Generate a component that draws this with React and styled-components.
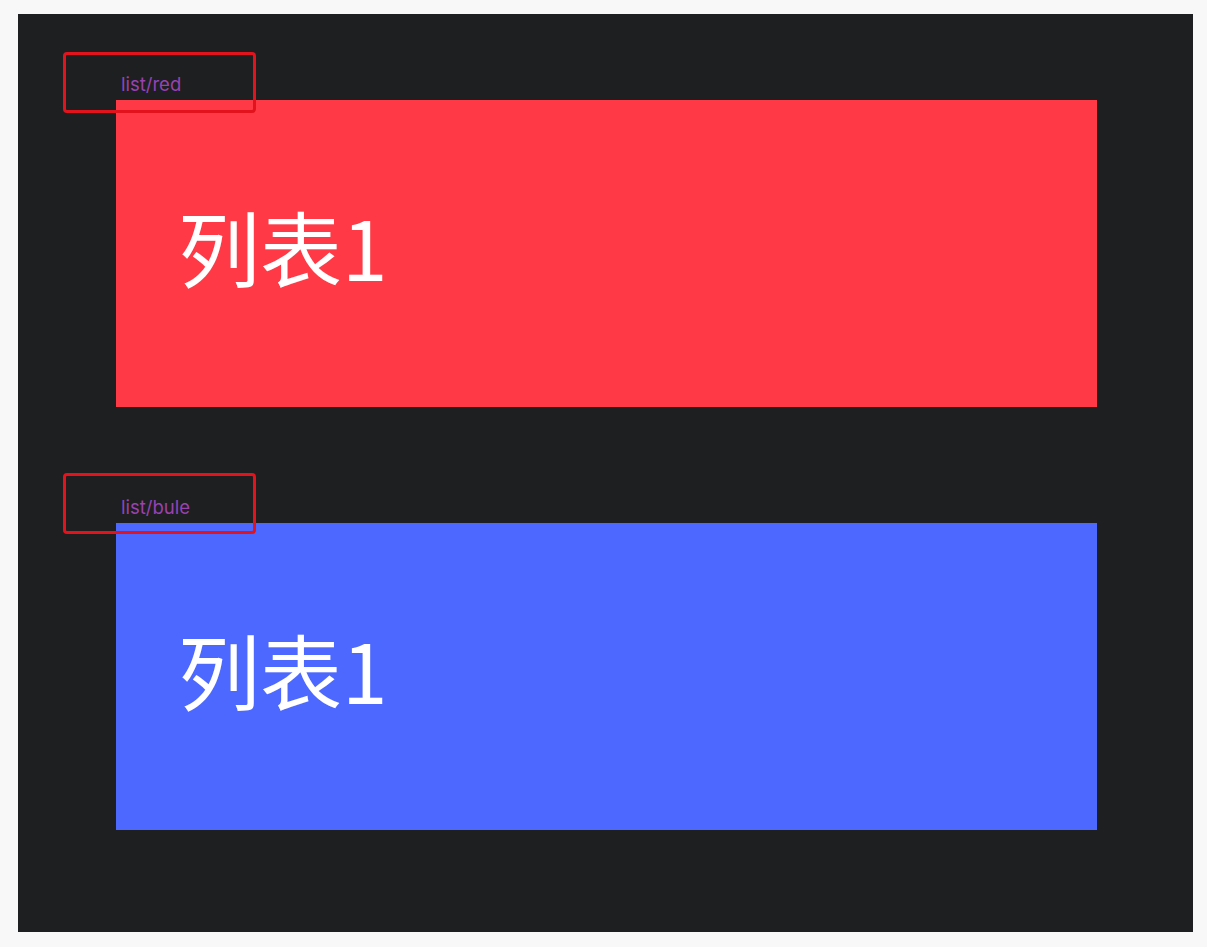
import styled, { createGlobalStyle } from "styled-components";

const GlobalStyle = createGlobalStyle`
  body {
    margin: 0;
    background: #f8f8f8;
    font-family: Inter, "Noto Sans", "Noto Sans CJK SC", sans-serif;
  }
`;

const Canvas = styled.div`
  box-sizing: border-box;
  margin: 14px 14px 15px 18px;
  height: 918px;
  background: #1e1f21;
  padding: 62px 96px 0 98px;
  display: flex;
  flex-direction: column;
  gap: 92px;
`;

const Frame = styled.section`
  position: relative;
  display: flex;
  flex-direction: column;
`;

const FrameName = styled.div`
  height: 24px;
  line-height: 16px;
  padding-left: 5px;
  font-size: 18.5px;
  color: #9a42b2;
`;

// red highlight drawn over the frame name
const Highlight = styled.div`
  position: absolute;
  left: -53px;
  top: ${(p) => p.$top}px;
  width: 193px;
  height: 61px;
  box-sizing: border-box;
  border: 3px solid #e3131d;
  border-radius: 4px;
  z-index: 1;
`;

const ListItem = styled.div`
  height: 307px;
  box-sizing: border-box;
  background: ${(p) => p.$color};
  display: flex;
  align-items: center;
  padding: 0 0 16px 62px;
  font-family: "Noto Sans CJK SC", "Noto Sans", sans-serif;
  font-size: 82px;
  color: #ffffff;
`;

const frames = [
  { name: "list/red", color: "#ff3a46", top: -24 },
  { name: "list/bule", color: "#4d68ff", top: -26 },
];

const App = () => {
  return (
    <>
      <GlobalStyle />
      <Canvas>
        {frames.map((f) => (
          <Frame key={f.name}>
            <Highlight $top={f.top} />
            <FrameName>{f.name}</FrameName>
            <ListItem $color={f.color}>列表1</ListItem>
          </Frame>
        ))}
      </Canvas>
    </>
  );
};

export default App;
